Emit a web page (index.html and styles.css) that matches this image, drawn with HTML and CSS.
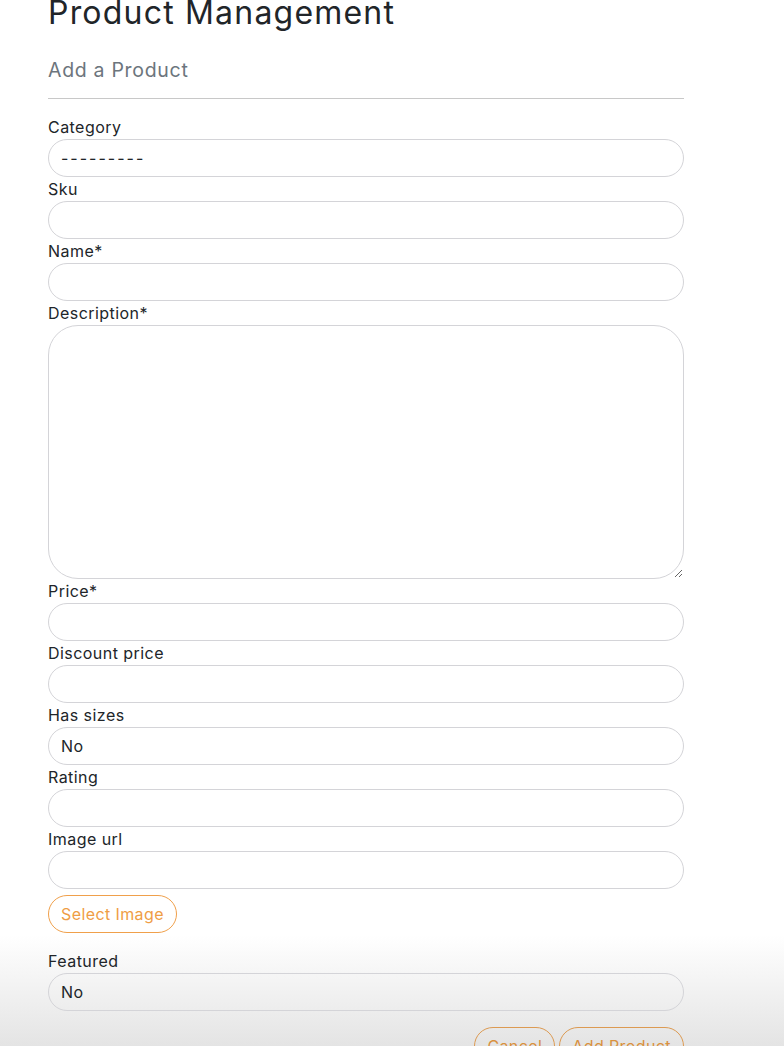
FILE: index.html
```html
<!DOCTYPE html>
<html lang="en">
<head>
<meta charset="utf-8">
<title>Product Management</title>
<link rel="stylesheet" href="styles.css">
</head>
<body>
<main class="page">
  <h1 class="title">Product Management</h1>
  <h2 class="subtitle">Add a Product</h2>
  <hr class="rule">
  <form class="form">
    <label class="label" for="category">Category</label>
    <select class="field dashes" id="category"><option>---------</option></select>
    <label class="label" for="sku">Sku</label>
    <input class="field" id="sku" type="text">
    <label class="label" for="name">Name*</label>
    <input class="field" id="name" type="text">
    <label class="label" for="desc">Description*</label>
    <textarea class="field area" id="desc"></textarea>
    <label class="label" for="price">Price*</label>
    <input class="field" id="price" type="text">
    <label class="label" for="dprice">Discount price</label>
    <input class="field" id="dprice" type="text">
    <label class="label" for="sizes">Has sizes</label>
    <select class="field" id="sizes"><option>No</option></select>
    <label class="label" for="rating">Rating</label>
    <input class="field" id="rating" type="text">
    <label class="label" for="img">Image url</label>
    <input class="field" id="img" type="text">
    <div class="select-row"><button type="button" class="btn">Select Image</button></div>
    <label class="label featured" for="featured">Featured</label>
    <select class="field" id="featured"><option>No</option></select>
    <div class="actions">
      <button type="button" class="btn">Cancel</button>
      <button type="button" class="btn">Add Product</button>
    </div>
  </form>
</main>
</body>
</html>
```
FILE: styles.css
```css
* { box-sizing: border-box; }
html {
  margin: 0;
  padding: 0;
  height: 100%;
  background: linear-gradient(to bottom, #ffffff 0, #ffffff 935px, #e4e4e4 1046px) no-repeat;
  background-color: #fff;
}
body {
  margin: 0;
  padding: 0;
  height: 100%;
  font-family: Inter, "Noto Sans", sans-serif;
  color: #212529;
  overflow: hidden;
}
.page {
  width: 636px;
  margin-left: 48px;
  margin-top: -7px;
}
.title {
  font-size: 32px;
  font-weight: 400;
  line-height: 40px;
  margin: 0;
  letter-spacing: 1.2px;
}
.subtitle {
  font-size: 19.5px;
  font-weight: 400;
  color: #6c757d;
  line-height: 24px;
  margin: 25px 0 0;
  letter-spacing: 0.7px;
}
.rule {
  border: 0;
  border-top: 1px solid #c8c8c8;
  margin: 16px 0 16px;
}
.form { display: flex; flex-direction: column; }
.label {
  font-size: 16px;
  line-height: 24px;
  height: 24px;
  letter-spacing: 0.45px;
}
.field {
  display: block;
  width: 100%;
  height: 38px;
  border: 1px solid #d4d4d8;
  border-radius: 19px;
  background: transparent;
  padding: 0 12px;
  font-family: inherit;
  font-size: 16px;
  letter-spacing: 0.45px;
  color: #212529;
  appearance: none;
  -webkit-appearance: none;
  outline: none;
}
.dashes { letter-spacing: 2px; }
.area {
  height: 254px;
  border-radius: 30px;
  resize: vertical;
}
.select-row { margin-top: 6px; display: flex; }
.btn {
  height: 38px;
  border: 1px solid #f0a04b;
  border-radius: 19px;
  background: transparent;
  color: #ef9d45;
  font-family: inherit;
  font-size: 16px;
  letter-spacing: 0.4px;
  padding: 0 12px;
}
.featured { margin-top: 16px; }
.actions {
  display: flex;
  justify-content: flex-end;
  gap: 4px;
  margin-top: 16px;
}
.actions .btn { color: #d9913f; border-color: #dc9a52; }
```
